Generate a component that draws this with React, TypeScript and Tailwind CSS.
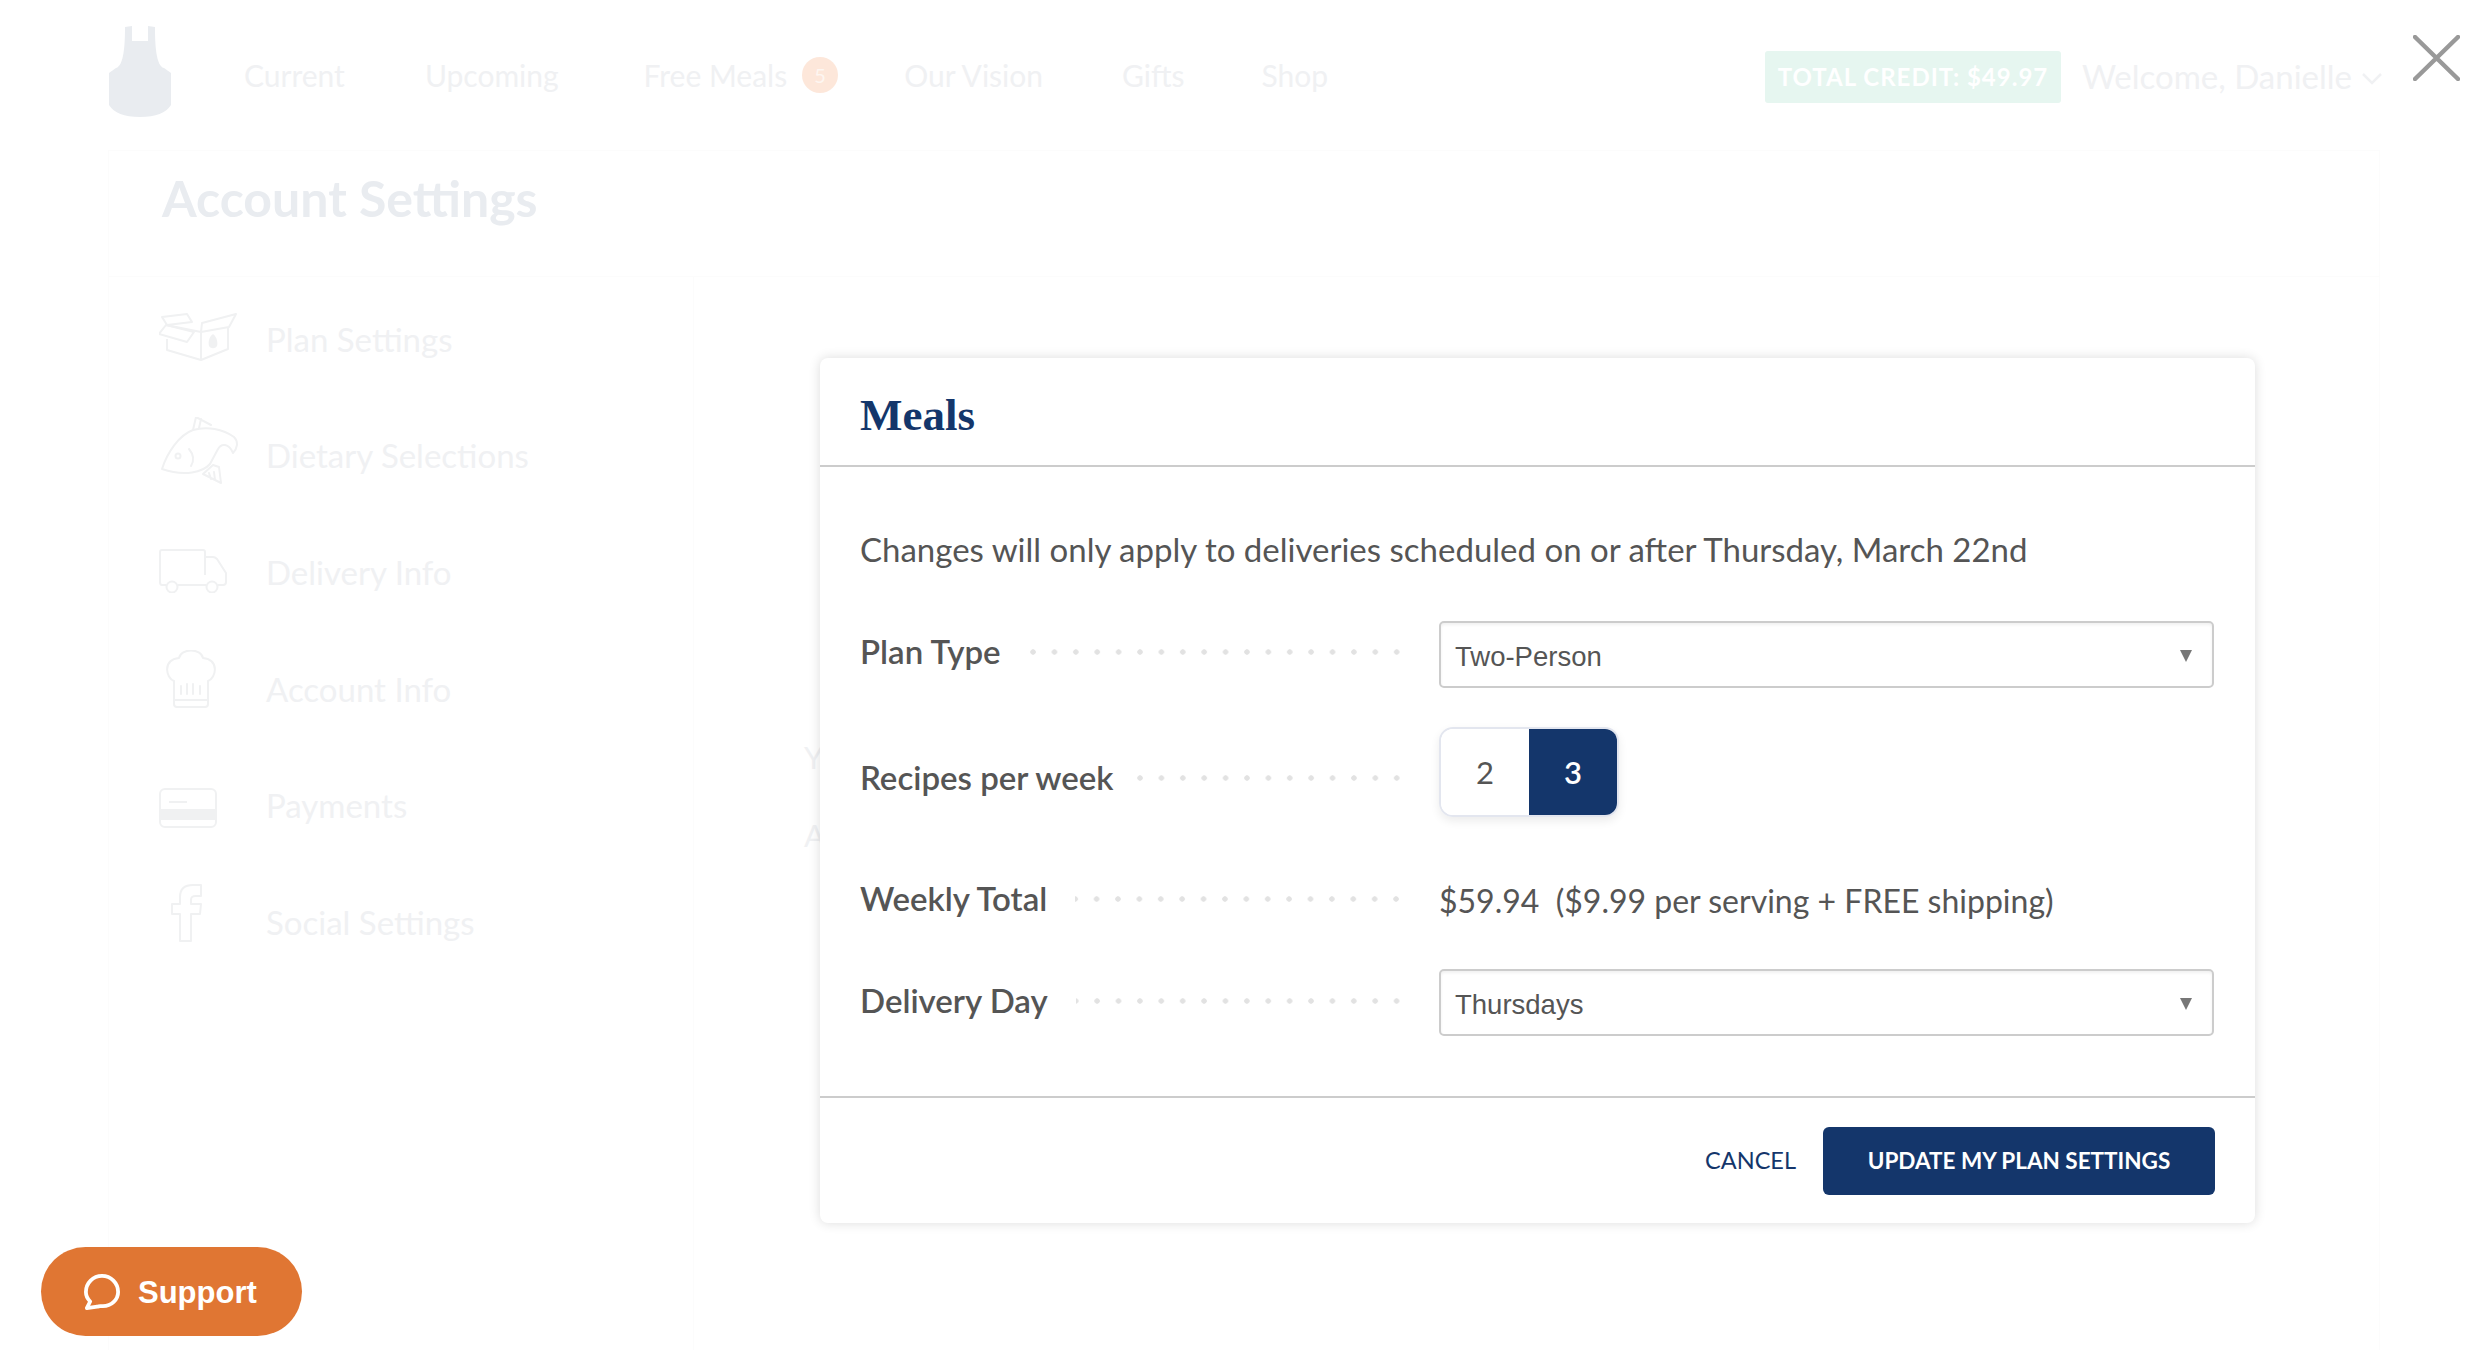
const sans = "font-['Lato','Liberation_Sans',sans-serif]";

function Apron() {
  return (
    <svg viewBox="0 0 64 91" className="mb-[7px] h-[91px] w-[64px]" fill="#e9ecf0">
      <path d="M17 1 L24 0 L24 15 L40 15 L40 0 L47 1 C47 18 48 40 56 42 L63 47 L63 79 C58 87 48 91 32 91 C16 91 6 87 1 79 L1 47 L8 42 C16 40 17 18 17 1 Z" />
    </svg>
  );
}

function BoxIcon() {
  return (
    <svg viewBox="0 0 80 48" className="h-[48px] w-[80px]" fill="none" stroke="#f0f1f2" strokeWidth="2" strokeLinejoin="round">
      <path d="M3 4 L28 1 L33 9 L8 12 Z" />
      <path d="M0 21 L28 29 L35 19 L7 12 Z" />
      <path d="M7 12 L42 19 M43 10 L77 1 L70 14 L42 19 Z" />
      <path d="M8 26 L8 37 L42 47 L69 36 L69 14 M42 19 L42 47" />
      <path d="M54 21 C58 24 59 30 58 33 C56 36 52 36 50 33 C49 29 50 24 54 21 Z" fill="#f0f1f2" stroke="none" />
    </svg>
  );
}

function FishIcon() {
  return (
    <svg viewBox="0 0 80 68" className="h-[68px] w-[80px]" fill="none" stroke="#f0f1f2" strokeWidth="2" strokeLinejoin="round" strokeLinecap="round">
      <path d="M1 52 C6 36 18 18 32 13 C46 9 62 12 73 20 C78 25 76 32 72 36 C68 26 60 26 57 32 L49 47 C42 55 24 60 1 52 Z" />
      <path d="M32 13 L35 0 L50 8 M40 2 L38 11" />
      <path d="M42 57 L52 48 L58 50 L60 66 Z M48 56 L50 62 M53 55 L54 63" />
      <circle cx="17" cy="39" r="2.5" />
      <path d="M28 32 C33 38 33 44 30 49" />
    </svg>
  );
}

function TruckIcon() {
  return (
    <svg viewBox="0 0 68 44" className="h-[44px] w-[68px]" fill="none" stroke="#f0f1f2" strokeWidth="2" strokeLinejoin="round">
      <path d="M7 36 L3 36 C1 36 1 34 1 33 L1 3 C1 1 2 1 3 1 L44 1 C46 1 46 2 46 3 L46 26" />
      <path d="M46 8 L54 8 C56 8 57 9 58 10 L67 24 L67 33 C67 35 66 36 64 36 L59 36" />
      <path d="M19 36 L47 36" />
      <circle cx="13" cy="38" r="5.5" />
      <circle cx="53" cy="38" r="5.5" />
    </svg>
  );
}

function HatIcon() {
  return (
    <svg viewBox="0 0 56 58" className="h-[58px] w-[56px]" fill="none" stroke="#f0f1f2" strokeWidth="2" strokeLinejoin="round" strokeLinecap="round">
      <path d="M11 31 C3 28 -1 10 16 8 C18 -2 38 -2 40 8 C57 10 53 28 45 31 L45 54 C45 56 44 57 42 57 L14 57 C12 57 11 56 11 54 Z" />
      <path d="M11 50 L45 50 M18 36 L18 44 M24 34 L24 44 M30 34 L30 44 M37 36 L37 44" />
    </svg>
  );
}

function CardIcon() {
  return (
    <svg viewBox="0 0 58 40" className="h-[40px] w-[58px]" fill="none" stroke="#f0f1f2" strokeWidth="2">
      <rect x="1" y="1" width="56" height="38" rx="5" />
      <rect x="1" y="21" width="56" height="11" fill="#f0f1f2" stroke="none" />
      <path d="M10 14 L28 14" />
    </svg>
  );
}

function FIcon() {
  return (
    <svg viewBox="0 0 32 58" className="h-[58px] w-[32px]" fill="none" stroke="#f0f1f2" strokeWidth="2" strokeLinejoin="round">
      <path d="M9 57 L9 30 L1 30 L1 20 L9 20 L9 13 C9 4 14 1 22 1 L30 1 L30 12 L25 12 C21 12 20 13 20 16 L20 20 L30 20 L29 30 L20 30 L20 57 Z" />
    </svg>
  );
}

const navItems = [
  { label: "Current", className: "ml-[72px]" },
  { label: "Upcoming", className: "ml-[80px]" },
  { label: "Free Meals", className: "ml-[85px]" },
];

const sideItems = [
  { label: "Plan Settings", icon: <div className="pb-[4px]"><BoxIcon /></div> },
  { label: "Dietary Selections", icon: <div className="pb-[10px] pl-[2px]"><FishIcon /></div> },
  { label: "Delivery Info", icon: <div className="pb-[3px]"><TruckIcon /></div> },
  { label: "Account Info", icon: <div className="pb-[20px] pl-[4px]"><HatIcon /></div> },
  { label: "Payments", icon: <div className="pt-[3px]"><CardIcon /></div> },
  { label: "Social Settings", icon: <div className="pb-[20px] pl-[12px]"><FIcon /></div> },
];

function BackgroundPage() {
  return (
    <div className={`${sans} text-[#f0f1f3]`}>
      <header className="flex h-[150px] items-center pl-[108px] pr-[106px] text-[30px]">
        <Apron />
        {navItems.map((item) => (
          <span key={item.label} className={item.className}>{item.label}</span>
        ))}
        <span className="ml-[15px] flex h-[36px] w-[36px] items-center justify-center rounded-full bg-[#fde7da] text-[20px] text-[#fdf6f1]">5</span>
        <span className="ml-[66px]">Our Vision</span>
        <span className="ml-[79px]">Gifts</span>
        <span className="ml-[77px]">Shop</span>
        <span className="ml-auto mt-[3px] flex h-[52px] w-[296px] items-center justify-center rounded-[3px] bg-[#e6f6f0] text-[24px] font-bold tracking-[1px] text-white">TOTAL CREDIT: $49.97</span>
        <span className="ml-[21px] mt-[3px] text-[33px]">Welcome, Danielle</span>
        <svg viewBox="0 0 20 12" className="ml-[10px] mt-[8px] h-[12px] w-[20px]" fill="none" stroke="#f0f1f3" strokeWidth="2.5">
          <path d="M1 1 L10 10 L19 1" />
        </svg>
      </header>
      <div className="mx-[108px] border-x border-t border-[#fcfcfc]">
        <div className="flex h-[126px] items-center border-b border-[#fcfcfc] pb-[30px] pl-[53px] text-[50px] font-bold text-[#e9ecf0]">
          Account Settings
        </div>
        <div className="flex">
          <nav className="h-[1074px] w-[585px] border-r border-[#fcfcfc] pl-[50px] pt-[4px]">
            {sideItems.map((item) => (
              <div key={item.label} className="flex h-[116.7px] items-center">
                <div className="w-[107px]">{item.icon}</div>
                <span className="text-[33px]">{item.label}</span>
              </div>
            ))}
          </nav>
          <div className="pl-[110px] pt-[441px] text-[31px] leading-[78px]">
            <div>Y</div>
            <div>A</div>
          </div>
        </div>
      </div>
    </div>
  );
}

function Select({ value }: { value: string }) {
  return (
    <div className="flex h-[67px] w-[775px] items-center justify-between rounded-[5px] border-2 border-[#cccccc] bg-white pl-[14px] pr-[20px] font-['Liberation_Sans',sans-serif] text-[27.5px] text-[#555555] shadow-[inset_0_2px_3px_rgba(0,0,0,0.06)]">
      <span className="pt-[4px]">{value}</span>
      <svg viewBox="0 0 12 12" className="mt-[2px] h-[12px] w-[12px]" fill="#777777">
        <path d="M0 0 L12 0 L6 12 Z" />
      </svg>
    </div>
  );
}

function Row({ label, className, labelClassName = "", gapClassName = "mr-[28px]", children }: { label: string; className: string; labelClassName?: string; gapClassName?: string; children: React.ReactNode }) {
  return (
    <div className={`flex items-center ${className}`}>
      <div className={`flex w-[579px] items-center pr-[32px] ${labelClassName}`}>
        <span className={`whitespace-nowrap text-[33px] font-semibold text-[#555555] ${gapClassName}`}>{label}</span>
        <div className="h-[6px] flex-1 bg-[radial-gradient(circle,#e2e2e2_2.4px,transparent_3px)] bg-[length:21.4px_6px] bg-right" />
      </div>
      {children}
    </div>
  );
}

function Modal() {
  return (
    <div className={`absolute left-[820px] top-[358px] flex h-[865px] w-[1435px] flex-col rounded-[8px] bg-white shadow-[0_0_12px_rgba(0,0,0,0.14)] ${sans}`}>
      <div className="flex h-[109px] items-center border-b-2 border-[#cccccc] pl-[40px]">
        <h1 className="pt-[8px] font-['Liberation_Serif',serif] text-[45px] font-bold text-[#14366b]">Meals</h1>
      </div>
      <div className="flex-1 pl-[40px]">
        <p className="mt-[56px] h-[52px] text-[33px] leading-[52px] text-[#555555]">
          Changes will only apply to deliveries scheduled on or after Thursday, March 22nd
        </p>
        <Row label="Plan Type" className="mt-[46px]" labelClassName="pb-[6px]">
          <Select value="Two-Person" />
        </Row>
        <Row label="Recipes per week" className="mt-[39px]" labelClassName="pt-[11px]" gapClassName="mr-[14px]">
          <div className="flex h-[90px] w-[180px] overflow-hidden rounded-[14px] border-2 border-[#e3e6ef] text-[31px] shadow-[0_4px_10px_rgba(0,0,0,0.08)]">
            <span className="flex w-[88px] items-center justify-center bg-white text-[#555555]">2</span>
            <span className="flex flex-1 items-center justify-center bg-[#14366b] font-semibold text-white">3</span>
          </div>
        </Row>
        <Row label="Weekly Total" className="mt-[52px] h-[60px]">
          <span className="whitespace-pre pt-[4px] text-[32px] text-[#555555]">$59.94  ($9.99 per serving + FREE shipping)</span>
        </Row>
        <Row label="Delivery Day" className="mt-[40px]" labelClassName="pb-[4px]">
          <Select value="Thursdays" />
        </Row>
      </div>
      <div className="flex h-[127px] items-center justify-end border-t-2 border-[#cccccc] pr-[40px]">
        <span className="mr-[27px] text-[23.5px] text-[#14366b]">CANCEL</span>
        <button className="flex h-[68px] w-[392px] items-center justify-center rounded-[6px] bg-[#14366b] text-[22.5px] font-bold text-white">
          UPDATE MY PLAN SETTINGS
        </button>
      </div>
    </div>
  );
}

export default function App() {
  return (
    <div className="relative h-[1350px] w-[2488px] overflow-hidden bg-white">
      <BackgroundPage />
      <Modal />
      <button className="absolute right-[28px] top-[35px] h-[46px] w-[47px]">
        <svg viewBox="0 0 47 46" className="h-full w-full" fill="none" stroke="#999999" strokeWidth="4.5" strokeLinecap="round">
          <path d="M2 2 L45 44 M45 2 L2 44" />
        </svg>
      </button>
      <button className="absolute left-[41px] top-[1247px] flex h-[89px] w-[261px] items-center rounded-full bg-[#e07633] pl-[43px] font-['Liberation_Sans',sans-serif] text-[31px] font-bold text-white">
        <svg viewBox="0 0 38 38" className="mr-[18px] h-[36px] w-[36px]" fill="none" stroke="white" strokeWidth="4" strokeLinecap="round" strokeLinejoin="round">
          <path d="M19 2 C28.5 2 36 9.5 36 19 C36 27 29 34 20 34 C17.5 34 16 33.5 14 34.5 L3 36 L6.5 29 C3.5 26 2 23 2 19 C2 9.5 9.5 2 19 2 Z" />
        </svg>
        <span className="pt-[3px]">Support</span>
      </button>
    </div>
  );
}
